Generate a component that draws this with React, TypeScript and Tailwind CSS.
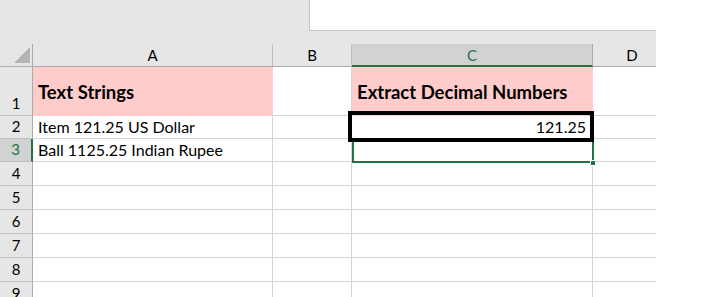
import React from "react";

const font = { fontFamily: "Lato, 'Open Sans', sans-serif" };

const colWidths = ["w-[240px]", "w-[79px]", "w-[241px]", "w-[79px]"];
const colNames = ["A", "B", "C", "D"];
const rowHeights = ["h-[49px]", "h-[23px]", "h-[23px]", "h-[24px]", "h-[24px]", "h-[24px]", "h-[24px]", "h-[24px]", "h-[24px]"];

const cells: Record<string, { text: string; bold?: boolean; pink?: boolean; right?: boolean }> = {
  A1: { text: "Text Strings", bold: true, pink: true },
  C1: { text: "Extract Decimal Numbers", bold: true, pink: true },
  A2: { text: "Item 121.25 US Dollar" },
  C2: { text: "121.25", right: true },
  A3: { text: "Ball 1125.25 Indian Rupee" },
};

const App = () => {
  return (
    <main className="w-[720px] h-[297px] bg-white overflow-hidden text-black" style={font}>
      <div className="relative w-[656px] h-[297px] overflow-hidden">
        {/* formula / name box strip */}
        <div className="h-[44px] bg-[#e6e6e6] flex">
          <div className="ml-[309px] w-[347px] h-[31px] bg-white border-l border-b border-[#c6c6c6]" />
        </div>

        {/* column headers */}
        <div className="flex h-[23px] w-[672px] bg-[#e6e6e6] text-[15px]">
          <div className="relative w-[33px] border-r border-b border-[#ababab]">
            <svg width="17" height="17" className="absolute left-[14px] top-[3px]">
              <polygon points="16,0 16,16 0,16" fill="#b4b4b4" />
            </svg>
          </div>
          {colNames.map((c, i) => (
            <div
              key={c}
              className={`${colWidths[i]} shrink-0 flex items-center justify-center ${
                c === "C"
                  ? "bg-[#d2d2d2] text-[#217346] border-b-2 border-b-[#217346] border-r border-r-[#ababab]"
                  : "border-r border-r-[#bfbfbf] border-b border-b-[#ababab]"
              }`}
            >
              <span className="pt-[1px]">{c}</span>
            </div>
          ))}
        </div>

        {/* rows */}
        {rowHeights.map((h, r) => {
          const rowNo = r + 1;
          return (
            <div key={rowNo} className={`flex w-[672px] ${h}`}>
              <div
                className={`w-[33px] shrink-0 flex items-end justify-center pb-[1px] text-[15px] border-b border-[#bfbfbf] ${
                  rowNo === 3
                    ? "bg-[#d2d2d2] text-[#217346] border-r-2 border-r-[#217346]"
                    : "bg-[#e6e6e6] border-r border-r-[#ababab]"
                }`}
              >
                {rowNo}
              </div>
              {colNames.map((c, i) => {
                const cell = cells[`${c}${rowNo}`];
                return (
                  <div
                    key={c}
                    className={`${colWidths[i]} shrink-0 flex px-[5px] whitespace-nowrap ${
                      cell?.pink
                        ? "bg-[#ffcccc] border-r border-b border-[#ffcccc] items-center pt-[3px]"
                        : "border-r border-b border-[#d4d4d4] items-end text-[16px] leading-[22px]"
                    } ${cell?.bold ? "font-bold text-[18.5px]" : ""} ${cell?.right ? "justify-end pr-[6px]" : ""}`}
                  >
                    {cell?.text}
                  </div>
                );
              })}
            </div>
          );
        })}

        {/* selection overlays */}
        <div className="absolute left-[352px] top-[138px] w-[242px] h-[25px] border-2 border-[#217346]" />
        <div className="absolute left-[590px] top-[160px] w-[6px] h-[6px] bg-[#217346] border border-white" />
        <div className="absolute left-[348px] top-[111px] w-[246px] h-[31px] border-[4px] border-black" />
      </div>
    </main>
  );
};

export default App;
